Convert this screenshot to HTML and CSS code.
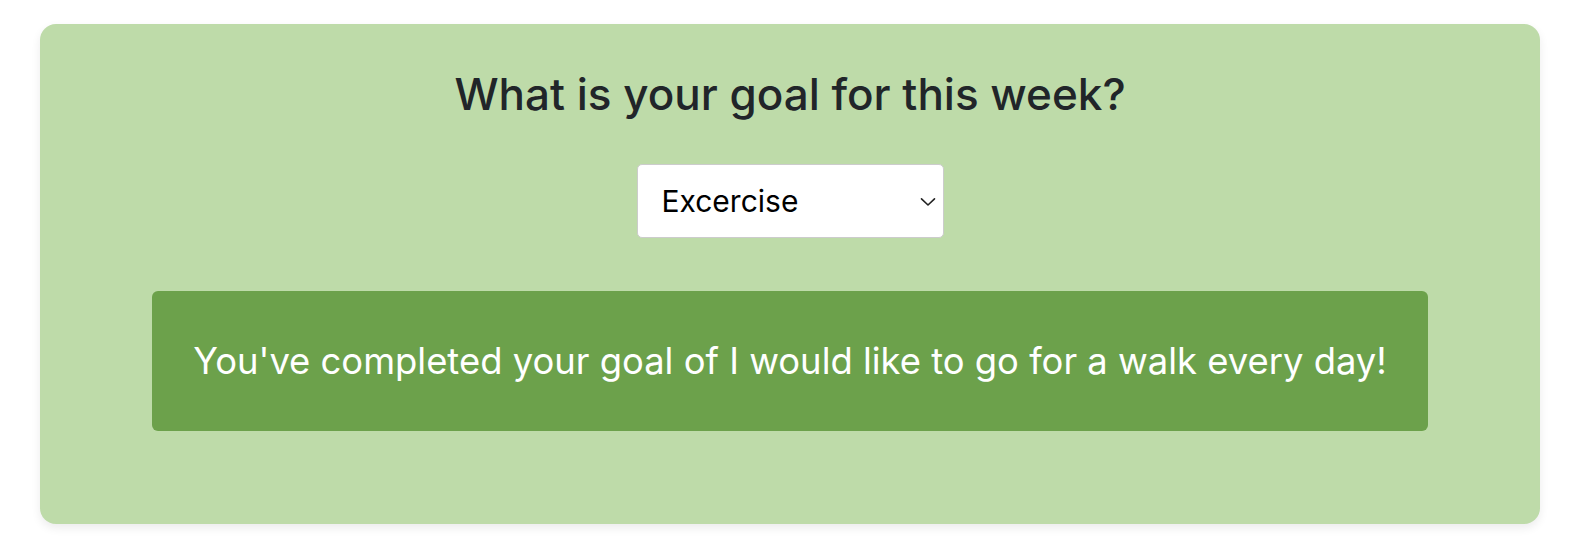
FILE: index.html
```html
<!DOCTYPE html>
<html lang="en">
<head>
<meta charset="utf-8">
<title>Weekly goal</title>
<link rel="stylesheet" href="styles.css">
</head>
<body>
<div class="page">
  <section class="card">
    <h1 class="title">What is your goal for this week?</h1>
    <div class="select-wrap">
      <select class="goal-select">
        <option>Excercise</option>
        <option>Reading</option>
        <option>Sleep</option>
      </select>
      <svg class="chevron" width="16" height="10" viewBox="0 0 16 10" aria-hidden="true">
        <path d="M1.5 1.8 L8 8 L14.5 1.8" fill="none" stroke="#222" stroke-width="1.6" stroke-linecap="round" stroke-linejoin="round"/>
      </svg>
    </div>
    <div class="alert">You've completed your goal of I would like to go for a walk every day!</div>
  </section>
</div>
</body>
</html>
```
FILE: styles.css
```css
html, body {
  margin: 0;
  background: #ffffff;
}
body {
  font-family: Inter, "Noto Sans", "Liberation Sans", sans-serif;
  color: #212529;
}
.page {
  padding: 24px 56px 32px 40px;
}
.card {
  background: #bedba9;
  border-radius: 16px;
  box-shadow: 0 4px 10px rgba(0, 0, 0, 0.08);
  padding: 46px 112px 93px;
  display: flex;
  flex-direction: column;
  align-items: center;
}
.title {
  margin: 0;
  font-size: 44px;
  font-weight: 500;
  line-height: 48px;
  color: #212529;
}
.select-wrap {
  position: relative;
  margin-top: 46px;
  width: 307px;
  height: 74px;
}
.goal-select {
  appearance: none;
  -webkit-appearance: none;
  width: 100%;
  height: 100%;
  box-sizing: border-box;
  border: 1px solid #cccccc;
  border-radius: 5px;
  background: #ffffff;
  padding: 0 40px 0 24px;
  font-family: Inter, "Noto Sans", "Liberation Sans", sans-serif;
  font-size: 30px;
  color: #000000;
}
.chevron {
  position: absolute;
  right: 8px;
  top: 33px;
  pointer-events: none;
}
.alert {
  align-self: stretch;
  margin-top: 53px;
  height: 140px;
  box-sizing: border-box;
  background: #6ca14b;
  border-radius: 6px;
  display: flex;
  align-items: center;
  justify-content: center;
  color: #ffffff;
  font-size: 36.4px;
  font-weight: 400;
}
```
